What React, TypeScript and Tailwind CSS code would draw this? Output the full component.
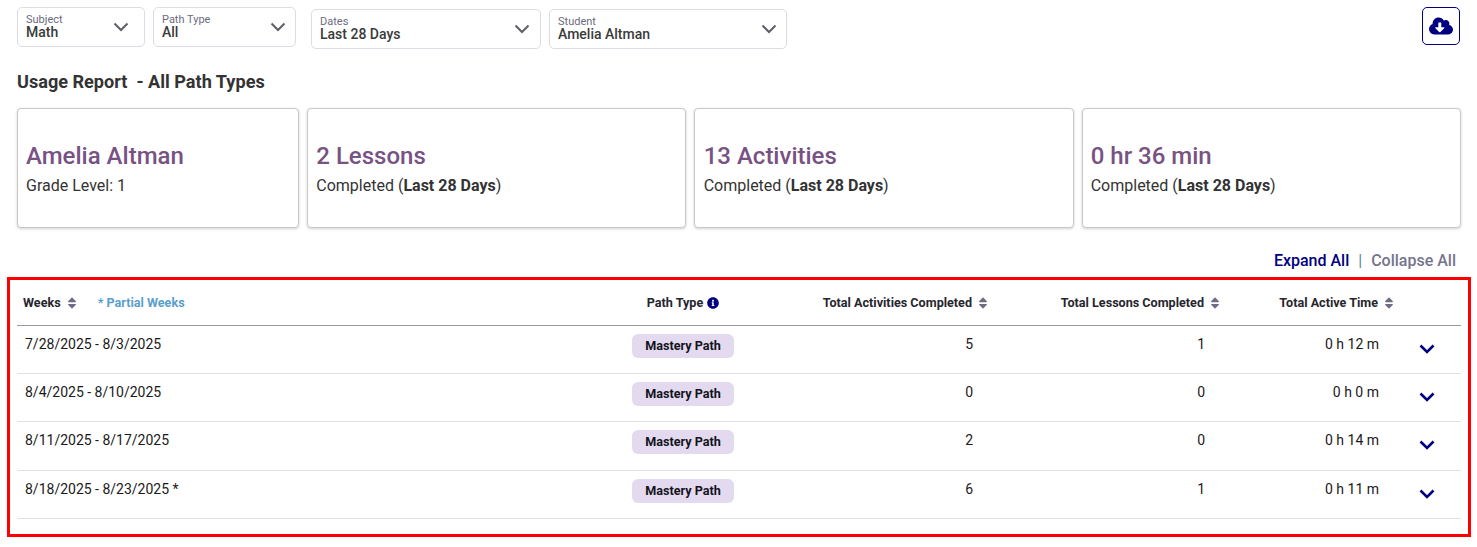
import { FaCloudDownloadAlt, FaInfoCircle, FaSort } from 'react-icons/fa'

const weeks = [
    { range: '7/28/2025 - 8/3/2025', activities: 5, lessons: 1, time: '0 h 12 m', h: 'h-[48px]' },
    { range: '8/4/2025 - 8/10/2025', activities: 0, lessons: 0, time: '0 h 0 m', h: 'h-[48px]' },
    { range: '8/11/2025 - 8/17/2025', activities: 2, lessons: 0, time: '0 h 14 m', h: 'h-[49px]' },
    { range: '8/18/2025 - 8/23/2025 *', activities: 6, lessons: 1, time: '0 h 11 m', h: 'h-[48px]' },
]

const cols = 'grid grid-cols-[563px_206px_202px_232px_174px_67px]'

function Chevron({ className }: { className: string }) {
    return (
        <svg viewBox="0 0 16 10" fill="none" stroke="currentColor" strokeWidth="2" className={className}>
            <path d="M1.5 1.5 8 8l6.5-6.5" />
        </svg>
    )
}

function Select({ label, value, className }: { label: string; value: string; className: string }) {
    return (
        <div className={`flex h-[40px] items-center justify-between rounded-[5px] border border-[#dcdce4] bg-white pl-[8px] ${className}`}>
            <div className="-mt-[1px] flex flex-col">
                <span className="text-[11px] leading-[11px] text-[#6b6b80]">{label}</span>
                <span className="text-sm leading-[15px] font-medium text-[#3a3a3a]">{value}</span>
            </div>
            <Chevron className="h-[10px] w-[16px] text-[#5f5f68]" />
        </div>
    )
}

function StatCard({ title, children, className }: { title: string; children: React.ReactNode; className: string }) {
    return (
        <div className={`flex h-[120px] flex-col justify-center rounded-[4px] border border-[#c8c8c8] bg-white pt-[2px] shadow-[0_1px_3px_rgba(0,0,0,0.18)] ${className}`}>
            <div className="text-2xl leading-[32px] font-medium text-[#775282]">{title}</div>
            <div className="mt-[2px] text-base leading-[24px] text-[#333333]">{children}</div>
        </div>
    )
}

function SortHeader({ label }: { label: string }) {
    return (
        <div className="flex items-center justify-end gap-[6px] text-[12.6px] font-bold text-[#26262e]">
            <span>{label}</span>
            <FaSort className="h-[14px] w-[10px] text-[#6e6d85]" />
        </div>
    )
}

export default function App() {
    return (
        <div className="h-[547px] w-[1477px] overflow-hidden bg-white font-['Roboto',sans-serif]">
            <div className="relative h-[108px]">
                <div className="flex items-start px-[17px] pt-[7px]">
                    <Select label="Subject" value="Math" className="w-[128px] pr-[15px]" />
                    <Select label="Path Type" value="All" className="ml-[8px] w-[143px] pr-[9px]" />
                    <Select label="Dates" value="Last 28 Days" className="ml-[15px] mt-[2px] w-[230px] pr-[10px]" />
                    <Select label="Student" value="Amelia Altman" className="ml-[8px] mt-[2px] w-[238px] pr-[9px]" />
                    <button className="ml-auto flex h-[38px] w-[38px] items-center justify-center rounded-[5px] border border-[#000080] text-[#000080]">
                        <FaCloudDownloadAlt className="h-[20px] w-[24px]" />
                    </button>
                </div>
                <h1 className="ml-[17px] mt-[19px] text-[18.1px] leading-[27px] font-bold whitespace-pre text-[#333333]">Usage Report  - All Path Types</h1>
            </div>

            <div className="flex gap-[8px] pl-[17px]">
                <StatCard title="Amelia Altman" className="w-[282.3px] pl-[8px]">Grade Level: 1</StatCard>
                <StatCard title="2 Lessons" className="w-[379px] pl-[8px]">Completed (<b className="font-bold">Last 28 Days</b>)</StatCard>
                <StatCard title="13 Activities" className="w-[379.4px] pl-[8.4px]">Completed (<b className="font-bold">Last 28 Days</b>)</StatCard>
                <StatCard title="0 hr 36 min" className="w-[378.9px] pl-[8px]">Completed (<b className="font-bold">Last 28 Days</b>)</StatCard>
            </div>

            <div className="flex h-[49px] items-center justify-end pr-[21px] pt-[16px] text-base font-medium">
                <span className="text-[#000080]">Expand All</span>
                <span className="mx-[9px] font-normal text-[#5b82b0]">|</span>
                <span className="text-[#74748c]">Collapse All</span>
            </div>

            <div className="ml-[7px] h-[260px] w-[1464px] border-[3px] border-[#ff0000] pl-[7px] pr-[7px]">
                <div className={`${cols} h-[46px] items-center border-b border-[#98989f] pt-[1px]`}>
                    <div className="flex items-center pl-[6px] text-[12.6px] font-bold text-[#26262e]">
                        <span>Weeks</span>
                        <FaSort className="ml-[6px] h-[14px] w-[10px] text-[#6e6d85]" />
                        <span className="ml-[21px] text-[#5a9fcc]">* Partial Weeks</span>
                    </div>
                    <div className="flex items-center justify-center gap-[4px] text-[12.6px] font-bold text-[#26262e]">
                        <span>Path Type</span>
                        <FaInfoCircle className="h-[12px] w-[12px] text-[#000080]" />
                    </div>
                    <SortHeader label="Total Activities Completed" />
                    <SortHeader label="Total Lessons Completed" />
                    <SortHeader label="Total Active Time" />
                    <div />
                </div>
                {weeks.map(w => (
                    <div key={w.range} className={`${cols} ${w.h} items-start border-b border-[#dfe0e6] text-sm text-[#1a1a1a]`}>
                        <div className="pl-[8px] pt-[9px] leading-[18px]">{w.range}</div>
                        <div className="flex justify-center pt-[8px]">
                            <span className="flex h-[24px] w-[102px] items-center justify-center rounded-[6px] bg-[#e4daf0] text-[12.6px] font-bold text-[#14141c]">Mastery Path</span>
                        </div>
                        <div className="pr-[15px] pt-[9px] text-right leading-[18px]">{w.activities}</div>
                        <div className="pr-[15px] pt-[9px] text-right leading-[18px]">{w.lessons}</div>
                        <div className="pr-[15px] pt-[9px] text-right leading-[18px]">{w.time}</div>
                        <div className="flex justify-center pr-[2px] pt-[18px]">
                            <Chevron className="h-[10px] w-[16px] stroke-[2.6px] text-[#000080]" />
                        </div>
                    </div>
                ))}
            </div>
        </div>
    )
}
